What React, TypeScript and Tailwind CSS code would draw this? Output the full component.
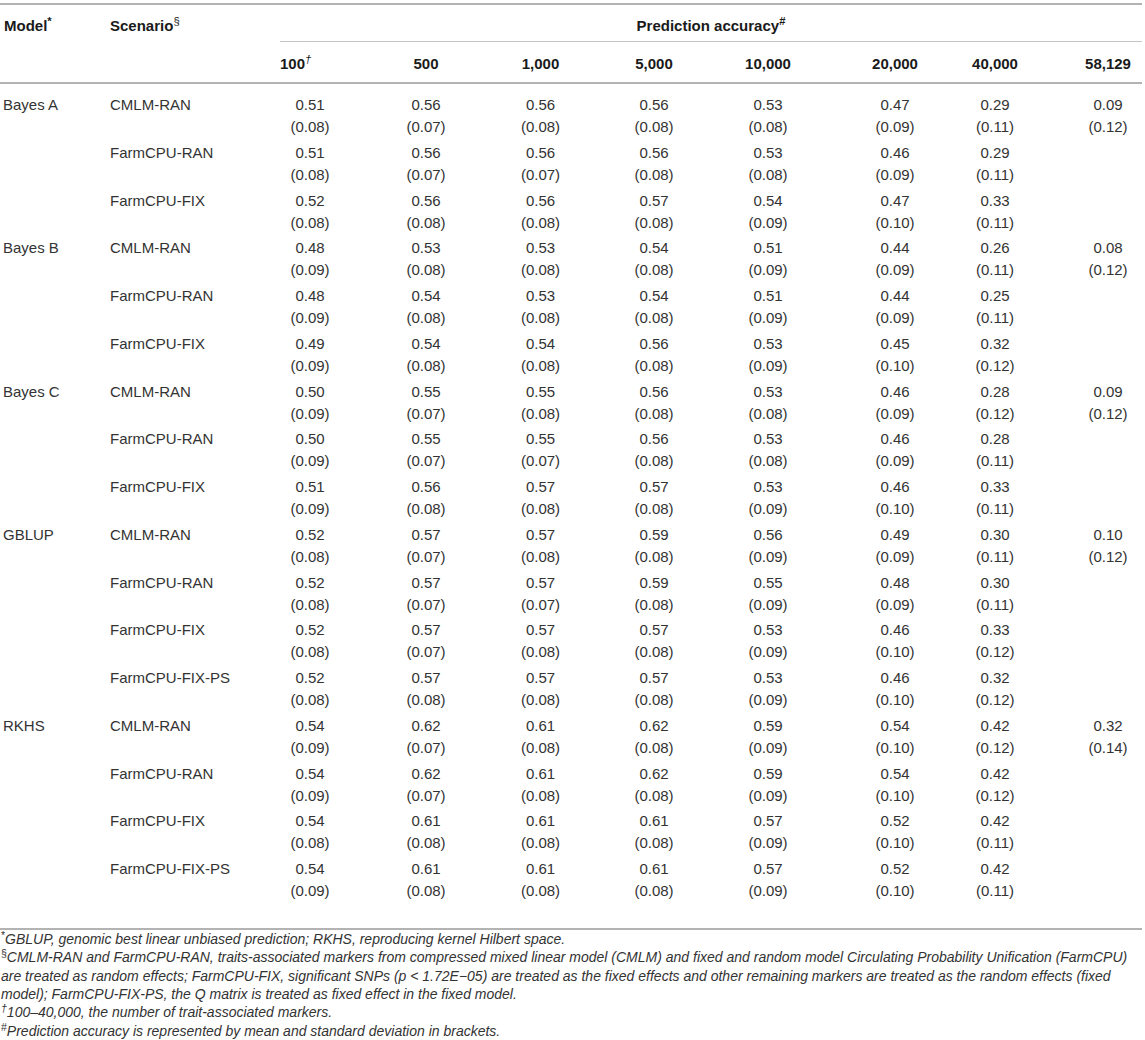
const cols = ['100', '500', '1,000', '5,000', '10,000', '20,000', '40,000', '58,129'];

// per-column nudges so the centred numbers land where the source table puts them
const colPad = ['pr-[28px]', '', '', '', 'pr-[7px]', 'pl-[13px]', 'pr-[7px]', 'pl-[22px]'];

const grid =
  'grid grid-cols-[110px_170px_88px_116px_113px_114px_121px_113px_107px_90px]';

type Row = { model?: string; scenario: string; values: string };

const rows: Row[] = [
  { model: 'Bayes A', scenario: 'CMLM-RAN', values: '0.51/0.08 0.56/0.07 0.56/0.08 0.56/0.08 0.53/0.08 0.47/0.09 0.29/0.11 0.09/0.12' },
  { scenario: 'FarmCPU-RAN', values: '0.51/0.08 0.56/0.07 0.56/0.07 0.56/0.08 0.53/0.08 0.46/0.09 0.29/0.11' },
  { scenario: 'FarmCPU-FIX', values: '0.52/0.08 0.56/0.08 0.56/0.08 0.57/0.08 0.54/0.09 0.47/0.10 0.33/0.11' },
  { model: 'Bayes B', scenario: 'CMLM-RAN', values: '0.48/0.09 0.53/0.08 0.53/0.08 0.54/0.08 0.51/0.09 0.44/0.09 0.26/0.11 0.08/0.12' },
  { scenario: 'FarmCPU-RAN', values: '0.48/0.09 0.54/0.08 0.53/0.08 0.54/0.08 0.51/0.09 0.44/0.09 0.25/0.11' },
  { scenario: 'FarmCPU-FIX', values: '0.49/0.09 0.54/0.08 0.54/0.08 0.56/0.08 0.53/0.09 0.45/0.10 0.32/0.12' },
  { model: 'Bayes C', scenario: 'CMLM-RAN', values: '0.50/0.09 0.55/0.07 0.55/0.08 0.56/0.08 0.53/0.08 0.46/0.09 0.28/0.12 0.09/0.12' },
  { scenario: 'FarmCPU-RAN', values: '0.50/0.09 0.55/0.07 0.55/0.07 0.56/0.08 0.53/0.08 0.46/0.09 0.28/0.11' },
  { scenario: 'FarmCPU-FIX', values: '0.51/0.09 0.56/0.08 0.57/0.08 0.57/0.08 0.53/0.09 0.46/0.10 0.33/0.11' },
  { model: 'GBLUP', scenario: 'CMLM-RAN', values: '0.52/0.08 0.57/0.07 0.57/0.08 0.59/0.08 0.56/0.09 0.49/0.09 0.30/0.11 0.10/0.12' },
  { scenario: 'FarmCPU-RAN', values: '0.52/0.08 0.57/0.07 0.57/0.07 0.59/0.08 0.55/0.09 0.48/0.09 0.30/0.11' },
  { scenario: 'FarmCPU-FIX', values: '0.52/0.08 0.57/0.07 0.57/0.08 0.57/0.08 0.53/0.09 0.46/0.10 0.33/0.12' },
  { scenario: 'FarmCPU-FIX-PS', values: '0.52/0.08 0.57/0.08 0.57/0.08 0.57/0.08 0.53/0.09 0.46/0.10 0.32/0.12' },
  { model: 'RKHS', scenario: 'CMLM-RAN', values: '0.54/0.09 0.62/0.07 0.61/0.08 0.62/0.08 0.59/0.09 0.54/0.10 0.42/0.12 0.32/0.14' },
  { scenario: 'FarmCPU-RAN', values: '0.54/0.09 0.62/0.07 0.61/0.08 0.62/0.08 0.59/0.09 0.54/0.10 0.42/0.12' },
  { scenario: 'FarmCPU-FIX', values: '0.54/0.08 0.61/0.08 0.61/0.08 0.61/0.08 0.57/0.09 0.52/0.10 0.42/0.11' },
  { scenario: 'FarmCPU-FIX-PS', values: '0.54/0.09 0.61/0.08 0.61/0.08 0.61/0.08 0.57/0.09 0.52/0.10 0.42/0.11' },
];

const DataRow = ({ model, scenario, values }: Row) => {
  const cells = values.split(' ').map((v) => v.split('/'));
  return (
    <div className={`${grid} h-[47.75px] pt-[2px] leading-[22px]`}>
      <div className="pl-[3px]">{model}</div>
      <div>{scenario}</div>
      {cols.map((_, i) => (
        <div key={i} className={`text-center ${colPad[i]}`}>
          {cells[i] && (
            <>
              <div>{cells[i][0]}</div>
              <div>({cells[i][1]})</div>
            </>
          )}
        </div>
      ))}
    </div>
  );
};

export default function App() {
  return (
    <div className="w-[1145px] bg-white font-['Liberation_Sans',Arial,sans-serif] text-[15px] text-[#333]">
      <div className="w-[1142px] mt-[3px] border-t-2 border-b-2 border-[#b3b3b3]">
        {/* header */}
        <div className={`${grid} border-b-2 border-[#b3b3b3] font-bold text-[#1a1a1a] leading-[22px]`}>
          <div className="row-span-2 pl-[4px] pt-[10px]">
            Model<sup>*</sup>
          </div>
          <div className="row-span-2 pt-[10px]">
            Scenario<sup className="font-normal">§</sup>
          </div>
          <div className="col-span-8 text-center pt-[10px] pb-[4px] border-b border-[#c4c4c4]">
            Prediction accuracy<sup>#</sup>
          </div>
          {cols.map((c, i) => (
            <div key={c} className={`pt-[11px] pb-[7px] ${i === 0 ? 'text-left' : `text-center ${colPad[i]}`}`}>
              {c}
              {i === 0 && <sup className="italic font-normal">†</sup>}
            </div>
          ))}
        </div>

        {/* body */}
        <div className="pt-[8px] pb-[24px]">
          {rows.map((r, i) => (
            <DataRow key={i} {...r} />
          ))}
        </div>
      </div>

      {/* footnotes */}
      <div className="italic text-[14px] leading-[18.4px] text-[#333] pl-[1px]">
        <p>
          <sup className="not-italic">*</sup>GBLUP, genomic best linear unbiased prediction; RKHS, reproducing kernel Hilbert space.
        </p>
        <p>
          <sup className="not-italic">§</sup>CMLM-RAN and FarmCPU-RAN, traits-associated markers from compressed mixed linear model (CMLM) and fixed and random model Circulating Probability Unification (FarmCPU)
          <br />
          are treated as random effects; FarmCPU-FIX, significant SNPs (p &lt; 1.72E−05) are treated as the fixed effects and other remaining markers are treated as the random effects (fixed
          <br />
          model); FarmCPU-FIX-PS, the Q matrix is treated as fixed effect in the fixed model.
        </p>
        <p>
          <sup>†</sup>100–40,000, the number of trait-associated markers.
        </p>
        <p>
          <sup className="not-italic">#</sup>Prediction accuracy is represented by mean and standard deviation in brackets.
        </p>
      </div>
    </div>
  );
}
